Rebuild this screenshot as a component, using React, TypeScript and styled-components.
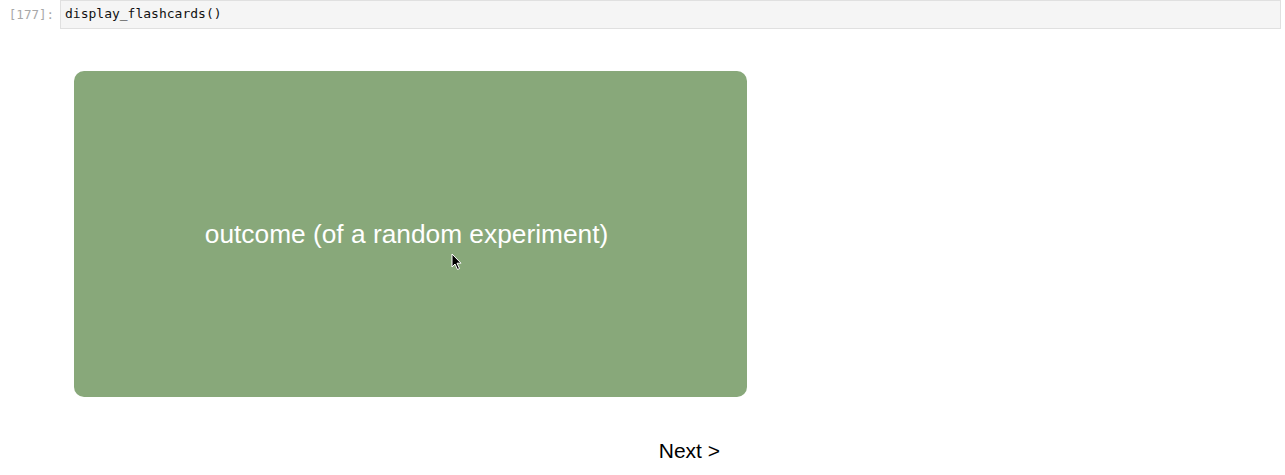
import React from "react";
import styled, { createGlobalStyle } from "styled-components";

const Global = createGlobalStyle`
  html, body { margin: 0; padding: 0; background: #fff; }
  body { font-family: "Liberation Sans", Arial, sans-serif; }
`;

const Page = styled.div`
  width: 1285px;
  height: 475px;
  position: relative;
  overflow: hidden;
`;

const CellRow = styled.div`
  display: flex;
  align-items: stretch;
  height: 29px;
  padding-right: 4px;
`;

const Prompt = styled.div`
  width: 60px;
  flex: none;
  box-sizing: border-box;
  padding: 7px 6px 0 0;
  text-align: right;
  font-family: "DejaVu Sans Mono", monospace;
  font-size: 12.5px;
  color: #a8a8a8;
`;

const InputBox = styled.div`
  flex: 1;
  background: #f5f5f5;
  border: 1px solid #e0e0e0;
  box-sizing: border-box;
  padding: 5px 4px 0 4px;
  font-family: "DejaVu Sans Mono", monospace;
  font-size: 13px;
  color: #111;
`;

const Output = styled.div`
  padding: 42px 0 0 74px;
  display: flex;
  flex-direction: column;
`;

const Card = styled.div`
  width: 673px;
  height: 326px;
  background: #88a87a;
  border-radius: 10px;
  display: flex;
  align-items: center;
  justify-content: center;
  color: #fff;
  font-size: 26.3px;
  padding-right: 8px;
  box-sizing: border-box;
  position: relative;
`;

const NextRow = styled.div`
  width: 673px;
  display: flex;
  justify-content: flex-end;
  padding: 42px 27px 0 0;
  box-sizing: border-box;
`;

const NextButton = styled.button`
  background: none;
  border: none;
  padding: 0;
  font-family: "Liberation Sans", Arial, sans-serif;
  font-size: 21px;
  color: #000;
  cursor: pointer;
`;

const Cursor = styled.svg`
  position: absolute;
  left: 377px;
  top: 182px;
`;

export default function App() {
  return (
    <>
      <Global />
      <Page>
        <CellRow>
          <Prompt>[177]:</Prompt>
          <InputBox>display_flashcards()</InputBox>
        </CellRow>
        <Output>
          <Card>
            outcome (of a random experiment)
            <Cursor width="12" height="18" viewBox="0 0 12 18">
              <path d="M1 1 L1 14 L4 11 L6.5 16.5 L8.5 15.5 L6 10.2 L10 10.2 Z" fill="#000" stroke="#fff" strokeWidth="1" strokeLinejoin="round" />
            </Cursor>
          </Card>
          <NextRow>
            <NextButton>Next &gt;</NextButton>
          </NextRow>
        </Output>
      </Page>
    </>
  );
}
